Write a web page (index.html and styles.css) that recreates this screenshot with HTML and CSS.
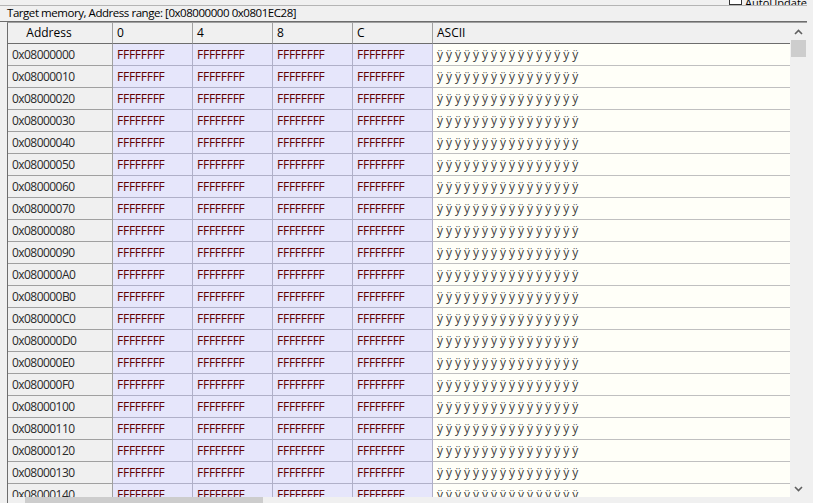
FILE: index.html
```html
<!DOCTYPE html>
<html>
<head>
<meta charset="utf-8">
<link rel="stylesheet" href="styles.css">
</head>
<body>
<div class="app">
  <div class="topstrip">
    <label class="auto"><span class="cb"></span><span class="cbtext">AutoUpdate</span></label>
  </div>
  <div class="titlebar">Target memory, Address range: [0x08000000 0x0801EC28]</div>
  <div class="view">
    <div class="main">
      <div class="gridwrap">
        <div class="grid">
          <div class="hd hd-addr">Address</div><div class="hd">0</div><div class="hd">4</div><div class="hd">8</div><div class="hd">C</div><div class="hd hd-ascii">ASCII</div>

          <div class="ad">0x08000000</div><div class="dv">FFFFFFFF</div><div class="dv">FFFFFFFF</div><div class="dv">FFFFFFFF</div><div class="dv">FFFFFFFF</div><div class="as">ÿÿÿÿÿÿÿÿÿÿÿÿÿÿÿÿ</div>
          <div class="ad">0x08000010</div><div class="dv">FFFFFFFF</div><div class="dv">FFFFFFFF</div><div class="dv">FFFFFFFF</div><div class="dv">FFFFFFFF</div><div class="as">ÿÿÿÿÿÿÿÿÿÿÿÿÿÿÿÿ</div>
          <div class="ad">0x08000020</div><div class="dv">FFFFFFFF</div><div class="dv">FFFFFFFF</div><div class="dv">FFFFFFFF</div><div class="dv">FFFFFFFF</div><div class="as">ÿÿÿÿÿÿÿÿÿÿÿÿÿÿÿÿ</div>
          <div class="ad">0x08000030</div><div class="dv">FFFFFFFF</div><div class="dv">FFFFFFFF</div><div class="dv">FFFFFFFF</div><div class="dv">FFFFFFFF</div><div class="as">ÿÿÿÿÿÿÿÿÿÿÿÿÿÿÿÿ</div>
          <div class="ad">0x08000040</div><div class="dv">FFFFFFFF</div><div class="dv">FFFFFFFF</div><div class="dv">FFFFFFFF</div><div class="dv">FFFFFFFF</div><div class="as">ÿÿÿÿÿÿÿÿÿÿÿÿÿÿÿÿ</div>
          <div class="ad">0x08000050</div><div class="dv">FFFFFFFF</div><div class="dv">FFFFFFFF</div><div class="dv">FFFFFFFF</div><div class="dv">FFFFFFFF</div><div class="as">ÿÿÿÿÿÿÿÿÿÿÿÿÿÿÿÿ</div>
          <div class="ad">0x08000060</div><div class="dv">FFFFFFFF</div><div class="dv">FFFFFFFF</div><div class="dv">FFFFFFFF</div><div class="dv">FFFFFFFF</div><div class="as">ÿÿÿÿÿÿÿÿÿÿÿÿÿÿÿÿ</div>
          <div class="ad">0x08000070</div><div class="dv">FFFFFFFF</div><div class="dv">FFFFFFFF</div><div class="dv">FFFFFFFF</div><div class="dv">FFFFFFFF</div><div class="as">ÿÿÿÿÿÿÿÿÿÿÿÿÿÿÿÿ</div>
          <div class="ad">0x08000080</div><div class="dv">FFFFFFFF</div><div class="dv">FFFFFFFF</div><div class="dv">FFFFFFFF</div><div class="dv">FFFFFFFF</div><div class="as">ÿÿÿÿÿÿÿÿÿÿÿÿÿÿÿÿ</div>
          <div class="ad">0x08000090</div><div class="dv">FFFFFFFF</div><div class="dv">FFFFFFFF</div><div class="dv">FFFFFFFF</div><div class="dv">FFFFFFFF</div><div class="as">ÿÿÿÿÿÿÿÿÿÿÿÿÿÿÿÿ</div>
          <div class="ad">0x080000A0</div><div class="dv">FFFFFFFF</div><div class="dv">FFFFFFFF</div><div class="dv">FFFFFFFF</div><div class="dv">FFFFFFFF</div><div class="as">ÿÿÿÿÿÿÿÿÿÿÿÿÿÿÿÿ</div>
          <div class="ad">0x080000B0</div><div class="dv">FFFFFFFF</div><div class="dv">FFFFFFFF</div><div class="dv">FFFFFFFF</div><div class="dv">FFFFFFFF</div><div class="as">ÿÿÿÿÿÿÿÿÿÿÿÿÿÿÿÿ</div>
          <div class="ad">0x080000C0</div><div class="dv">FFFFFFFF</div><div class="dv">FFFFFFFF</div><div class="dv">FFFFFFFF</div><div class="dv">FFFFFFFF</div><div class="as">ÿÿÿÿÿÿÿÿÿÿÿÿÿÿÿÿ</div>
          <div class="ad">0x080000D0</div><div class="dv">FFFFFFFF</div><div class="dv">FFFFFFFF</div><div class="dv">FFFFFFFF</div><div class="dv">FFFFFFFF</div><div class="as">ÿÿÿÿÿÿÿÿÿÿÿÿÿÿÿÿ</div>
          <div class="ad">0x080000E0</div><div class="dv">FFFFFFFF</div><div class="dv">FFFFFFFF</div><div class="dv">FFFFFFFF</div><div class="dv">FFFFFFFF</div><div class="as">ÿÿÿÿÿÿÿÿÿÿÿÿÿÿÿÿ</div>
          <div class="ad">0x080000F0</div><div class="dv">FFFFFFFF</div><div class="dv">FFFFFFFF</div><div class="dv">FFFFFFFF</div><div class="dv">FFFFFFFF</div><div class="as">ÿÿÿÿÿÿÿÿÿÿÿÿÿÿÿÿ</div>
          <div class="ad">0x08000100</div><div class="dv">FFFFFFFF</div><div class="dv">FFFFFFFF</div><div class="dv">FFFFFFFF</div><div class="dv">FFFFFFFF</div><div class="as">ÿÿÿÿÿÿÿÿÿÿÿÿÿÿÿÿ</div>
          <div class="ad">0x08000110</div><div class="dv">FFFFFFFF</div><div class="dv">FFFFFFFF</div><div class="dv">FFFFFFFF</div><div class="dv">FFFFFFFF</div><div class="as">ÿÿÿÿÿÿÿÿÿÿÿÿÿÿÿÿ</div>
          <div class="ad">0x08000120</div><div class="dv">FFFFFFFF</div><div class="dv">FFFFFFFF</div><div class="dv">FFFFFFFF</div><div class="dv">FFFFFFFF</div><div class="as">ÿÿÿÿÿÿÿÿÿÿÿÿÿÿÿÿ</div>
          <div class="ad">0x08000130</div><div class="dv">FFFFFFFF</div><div class="dv">FFFFFFFF</div><div class="dv">FFFFFFFF</div><div class="dv">FFFFFFFF</div><div class="as">ÿÿÿÿÿÿÿÿÿÿÿÿÿÿÿÿ</div>
          <div class="ad">0x08000140</div><div class="dv">FFFFFFFF</div><div class="dv">FFFFFFFF</div><div class="dv">FFFFFFFF</div><div class="dv">FFFFFFFF</div><div class="as">ÿÿÿÿÿÿÿÿÿÿÿÿÿÿÿÿ</div>
        </div>
      </div>
      <div class="vscroll">
        <div class="arrow">
          <svg width="9" height="6" viewBox="0 0 9 6"><path d="M1 5 L4.5 1.5 L8 5" fill="none" stroke="#606060" stroke-width="1.6"/></svg>
        </div>
        <div class="vthumb"></div>
        <div class="vtrack"></div>
        <div class="arrow">
          <svg width="9" height="6" viewBox="0 0 9 6"><path d="M1 1 L4.5 4.5 L8 1" fill="none" stroke="#606060" stroke-width="1.6"/></svg>
        </div>
      </div>
    </div>
    <div class="hscroll">
      <div class="harrow"></div>
      <div class="hthumb"></div>
    </div>
  </div>
</div>
</body>
</html>
```

FILE: styles.css
```css
* { box-sizing: border-box; }
html, body {
  margin: 0;
  padding: 0;
  background: #f0f0f0;
  font-family: "Open Sans", "Noto Sans", sans-serif;
  font-size: 12px;
  color: #000;
  overflow: hidden;
}
.app {
  width: 813px;
  height: 503px;
  display: flex;
  flex-direction: column;
  overflow: hidden;
}
.topstrip {
  height: 6px;
  display: flex;
  justify-content: flex-end;
  align-items: flex-end;
  overflow: hidden;
  border-bottom: 1px solid #b4b4b4;
  margin-right: 6px;
}
.auto {
  display: flex;
  align-items: flex-end;
  gap: 3px;
  margin-right: 0;
  line-height: 13px;
  font-size: 11px;
}
.cb {
  width: 13px;
  height: 13px;
  border: 1px solid #333;
  background: #fff;
  margin-bottom: 0;
}
.cbtext { margin-bottom: -4px; }
.titlebar {
  height: 16px;
  line-height: 14px;
  padding-left: 7px;
  font-size: 11.5px;
  letter-spacing: -0.45px;
  white-space: nowrap;
  border-bottom: 1px solid #6d6d6d;
  margin-right: 6px;
}
.view {
  flex: 1;
  display: flex;
  flex-direction: column;
  margin-left: 7px;
  margin-right: 6px;
  border-left: 1px solid #6d6d6d;
  border-top: 1px solid #a0a0a0;
  min-height: 0;
}
.main {
  flex: 1;
  display: flex;
  min-height: 0;
}
.gridwrap {
  flex: 1;
  overflow: hidden;
}
.grid {
  display: grid;
  grid-template-columns: 105px 80px 80px 80px 80px 1fr;
  grid-template-rows: 21px;
  grid-auto-rows: 22px;
}
.grid > div {
  border-right: 1px solid #a0a0a0;
  border-bottom: 1px solid #a0a0a0;
  padding-left: 4px;
  line-height: 21px;
  white-space: nowrap;
  overflow: hidden;
}
.grid > .hd {
  background: #f0f0f0;
  border-bottom: 1px solid #6d6d6d;
  border-right: 1px solid #a0a0a0;
  line-height: 20px;
}
.grid > .hd-addr { text-align: center; padding-left: 0; padding-right: 22px; }
.grid > .hd-ascii { border-right: none; }
.grid > .ad {
  background: #f0f0f0;
  color: #2a2a2a;
  letter-spacing: -0.55px;
}
.grid > .dv {
  background: #e6e6fb;
  color: #640000;
  letter-spacing: -0.25px;
  border-color: #b0b0c8;
}
.grid > .as {
  background: #fffff8;
  color: #404040;
  letter-spacing: 3px;
  border-right: none;
  border-bottom-color: #c0c0c0;
}
.vscroll {
  width: 17px;
  display: flex;
  flex-direction: column;
  background: #f0f0f0;
}
.arrow {
  height: 17px;
  display: flex;
  align-items: center;
  justify-content: center;
}
.vthumb {
  height: 17px;
  margin: 0 1px;
  background: #cdcdcd;
}
.vtrack { flex: 1; }
.hscroll {
  height: 6px;
  display: flex;
  background: #f0f0f0;
  margin-right: 17px;
}
.harrow { width: 17px; }
.hthumb {
  width: 238px;
  background: #cdcdcd;
}
```
